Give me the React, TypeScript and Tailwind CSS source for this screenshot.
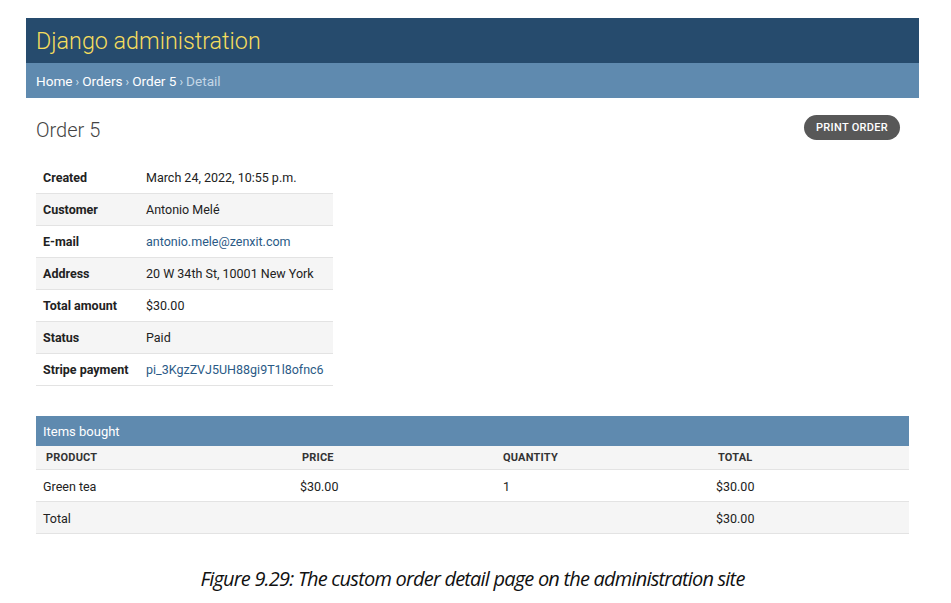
import React from 'react';

const rows: { label: string; value: string; link?: boolean }[] = [
  { label: 'Created', value: 'March 24, 2022, 10:55 p.m.' },
  { label: 'Customer', value: 'Antonio Melé' },
  { label: 'E-mail', value: 'antonio.mele@zenxit.com', link: true },
  { label: 'Address', value: '20 W 34th St, 10001 New York' },
  { label: 'Total amount', value: '$30.00' },
  { label: 'Status', value: 'Paid' },
  { label: 'Stripe payment', value: 'pi_3KgzZVJ5UH88gi9T1l8ofnc6', link: true },
];

const cols = 'grid grid-cols-[259px_201px_214px_1fr]';

export default function App() {
  return (
    <div className="w-[951px] h-[603px] bg-white font-['Roboto',sans-serif] text-[#333] overflow-hidden">
      <div className="pt-[18px] pl-[26px] pr-[32px]">
        {/* header */}
        <div className="h-[45px] bg-[#264b6d] flex items-center px-[10px] pt-[2px]">
          <span className="text-[23.3px] font-light text-[#f5dd5d]">Django administration</span>
        </div>
        {/* breadcrumbs */}
        <div className="h-[35px] bg-[#5f8aaf] flex items-center px-[10px] pt-[2px] text-[13.6px] text-white">
          <span>Home</span>
          <span className="mx-[3px] text-[12px] text-[#d4e2ee]">›</span>
          <span>Orders</span>
          <span className="mx-[3px] text-[12px] text-[#d4e2ee]">›</span>
          <span>Order 5</span>
          <span className="mx-[3px] text-[12px] text-[#d4e2ee]">›</span>
          <span className="text-[#c5d7e6]">Detail</span>
        </div>

        <div className="px-[10px]">
          {/* title */}
          <div className="flex items-start justify-between pt-[17px]">
            <h1 className="text-[20px] font-light text-[#444] leading-[30px]">Order 5</h1>
            <button className="mr-[9px] h-[25px] px-[12px] pt-[2px] rounded-full bg-[#585858] text-white text-[11px] font-medium tracking-[0.3px]">
              PRINT ORDER
            </button>
          </div>

          {/* detail table */}
          <div className="mt-[17px] w-[297px] text-[12.5px]">
            {rows.map((r, i) => (
              <div
                key={r.label}
                className={`flex items-center h-[32px] pt-[2px] border-b border-[#e3e3e3] ${i % 2 === 1 ? 'bg-[#f5f5f5]' : 'bg-white'}`}
              >
                <div className="w-[101px] pl-[7px] font-bold text-[12.5px] text-[#222]">{r.label}</div>
                <div className={`pl-[9px] ${r.link ? 'text-[#2a5a86]' : 'text-[#222]'}`}>{r.value}</div>
              </div>
            ))}
          </div>

          {/* items */}
          <div className="mt-[30px]">
            <div className="h-[30px] bg-[#5f8aaf] flex items-center pl-[7px] pt-[1px] text-white text-[13px]">Items bought</div>
            <div className={`${cols} h-[24px] pt-[2px] items-center bg-[#f5f5f5] border-b border-[#e3e3e3] text-[11px] font-bold text-[#333] tracking-[0.2px]`}>
              <div className="pl-[10px]">PRODUCT</div>
              <div className="pl-[7px]">PRICE</div>
              <div className="pl-[7px]">QUANTITY</div>
              <div className="pl-[8px]">TOTAL</div>
            </div>
            <div className={`${cols} h-[32px] pt-[3px] items-center border-b border-[#e3e3e3] text-[12.5px] text-[#222]`}>
              <div className="pl-[7px]">Green tea</div>
              <div className="pl-[5px]">$30.00</div>
              <div className="pl-[7px]">1</div>
              <div className="pl-[6px]">$30.00</div>
            </div>
            <div className={`${cols} h-[32px] pt-[3px] items-center bg-[#f5f5f5] border-b border-[#e3e3e3] text-[12.5px] text-[#222]`}>
              <div className="pl-[7px]">Total</div>
              <div />
              <div />
              <div className="pl-[6px]">$30.00</div>
            </div>
          </div>
        </div>
      </div>

      <div className="mt-[30px] pr-[6px] text-center text-[20px] italic text-[#111] font-['Open_Sans',sans-serif] tracking-[-0.8px]">
        Figure 9.29: The custom order detail page on the administration site
      </div>
    </div>
  );
}
